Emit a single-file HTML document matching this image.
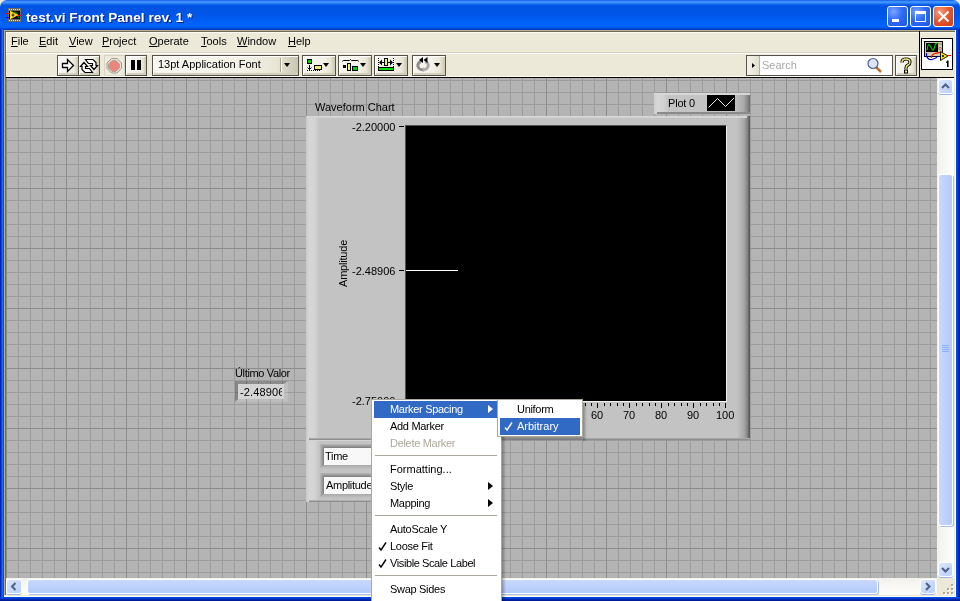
<!DOCTYPE html>
<html><head><meta charset="utf-8">
<style>
*{margin:0;padding:0;box-sizing:border-box}
html,body{width:960px;height:601px;overflow:hidden;background:#ECE9D8}
body{position:relative;font-family:"Liberation Sans",sans-serif;font-size:11px;color:#000;line-height:13px}
.a{position:absolute}
.nw{white-space:nowrap}
svg{display:block}
#title{left:0;top:0;width:960px;height:30px;border-radius:7px 7px 0 0;
 background:linear-gradient(to bottom,#0A40D8 0px,#3B92FF 1px,#3B92FF 3px,#1468EE 4px,#0054E3 6px,#0055E6 14px,#005DF4 20px,#0066FF 26px,#0058EE 28px,#0038C0 29px,#0038C0 30px)}
#ttext{left:26px;top:10px;color:#fff;font-weight:bold;font-size:13.7px;line-height:16px;text-shadow:1px 1px 0 #0A1E8C}
.tbtn{top:6px;width:21px;height:21px;border:1px solid #fff;border-radius:3px;
 background:radial-gradient(circle at 30% 25%,#7AA5FF 0,#2F6BF5 45%,#1E55E6 100%)}
.frL{left:0;top:29px;width:4px;height:572px;background:linear-gradient(to right,#0022B8 0,#0022B8 1px,#0848E0 1px,#0848E0 2px,#1A6CF5 2px,#1A6CF5 3px,#0050E0 3px)}
.frR{left:956px;top:29px;width:4px;height:572px;background:linear-gradient(to right,#0050EC 0,#0048E0 1px,#0034C8 2px,#0020A8 3px,#001890 4px)}
.frB{left:0;top:597px;width:960px;height:4px;background:linear-gradient(to bottom,#0050EC 0,#0044DC 1px,#0030C0 2px,#0020A0 3px,#001890 4px)}
#menu{left:4px;top:30px;width:952px;height:23px;background:#ECE9D8;border-top:1px solid #B9B08E;border-left:1px solid #B9B08E}
#menu2{left:5px;top:31px;width:950px;height:22px;border-top:1px solid #6E6A5C;border-left:1px solid #6E6A5C;box-shadow:inset 1px 1px 0 #FFFDF2}
.mi{top:35px}
.mi u{text-decoration:underline;text-decoration-thickness:1px;text-underline-offset:1px}
#tb{left:6px;top:52px;width:913px;height:25px;background:#ECE9D8;border-top:1px solid #D6D2C2;box-shadow:inset 0 1px 0 #fff}
.btn{top:55px;height:21px;border:1px solid #55534A;
 background:linear-gradient(to right,#F7F6EF 0,#F4F2E8 60%,#E9E6D6 85%,#C9C5B2 100%);
 box-shadow:inset 1px 1px 0 #fff,inset 0 -2px 1px #D3CFBC}
.dd{position:absolute;width:0;height:0;border-left:3.5px solid transparent;border-right:3.5px solid transparent;border-top:4px solid #000}
#panel{left:6px;top:78px;width:931px;height:500px;background-color:#B4B4B4;
 background-image:
  linear-gradient(to right,#8C8C8C 1px,transparent 1px),
  linear-gradient(to bottom,#8C8C8C 1px,transparent 1px),
  linear-gradient(to right,#9C9C9C 1px,transparent 1px),
  linear-gradient(to bottom,#9C9C9C 1px,transparent 1px);
 background-size:60px 60px,60px 60px,12px 12px,12px 12px;
 background-position:0px 50px,0px 50px,0px 2px,0px 2px}
.sb{background:linear-gradient(to right,#F3F1EC,#FEFEFB)}
.sbh{background:linear-gradient(to bottom,#F3F1EC,#FEFEFB)}
.sbtn{border:1px solid #fff;border-radius:3px;background:linear-gradient(135deg,#DCE6FD,#B9CEFA);box-shadow:0 1px 0 #98B4EC}
.thumbv{border:1px solid #fff;border-radius:3px;box-shadow:1px 1px 0 #A9BEEA;background:linear-gradient(to right,#C9D8FC,#BCD0FB 60%,#B3C9F8)}
.thumbh{border:1px solid #fff;border-radius:3px;box-shadow:1px 1px 0 #A9BEEA;background:linear-gradient(to bottom,#C9D8FC,#BCD0FB 60%,#B3C9F8)}
.sunk{border-style:solid;border-width:4px;border-color:rgba(0,0,0,.28) rgba(255,255,255,.12) rgba(255,255,255,.1) rgba(0,0,0,.32)}
.ml{left:16px;letter-spacing:-0.3px}
.row{position:absolute;left:2px;width:123px;height:17px}
.row span{position:absolute;top:2px}
.sep{position:absolute;left:3px;width:122px;height:1px;background:#ACA899}
.arr{position:absolute;left:114px;top:4px;width:0;height:0;border-top:4.5px solid transparent;border-bottom:4.5px solid transparent;border-left:5px solid #000}
.ck{position:absolute;left:4px;top:4px}
</style></head><body><div id="root" style="position:absolute;left:0;top:0;width:960px;height:601px;will-change:transform">
<!-- title bar -->
<div class="a" id="title"></div>
<svg class="a" style="left:5px;top:7px" width="18" height="16">
 <rect x="3" y="1" width="13" height="14" fill="#6E6A5E"/>
 <rect x="4" y="4" width="11" height="8" fill="#000"/>
 <path d="M4 2.5h11M4 13.5h11" stroke="#E0E0E0" stroke-dasharray="1 1"/>
 <path d="M9 5q2 -1 3 2t2 4" stroke="#00B000" fill="none"/>
 <path d="M5 3.5L13.5 8L5 12.5Z" fill="#FFD000"/>
 <path d="M6 5L11 8L6 11Z" fill="#FFE850"/>
 <path d="M8 6.5v3M6.5 8h3" stroke="#222" stroke-width="1.2"/>
 <path d="M1 6.5h4M13 8.5h4" stroke="#F00"/>
 <path d="M1 10.5h4" stroke="#00F"/>
</svg>
<div class="a nw" id="ttext">test.vi Front Panel rev. 1 *</div>
<div class="a tbtn" style="left:887px"><div class="a" style="left:4px;top:12px;width:7px;height:3px;background:#fff"></div></div>
<div class="a tbtn" style="left:910px"><div class="a" style="left:4px;top:4px;width:11px;height:11px;border:1px solid #fff;border-top:3px solid #fff"></div></div>
<div class="a tbtn" style="left:933px;background:radial-gradient(circle at 30% 25%,#F39C7E 0,#E2562D 50%,#D23C14 100%)">
 <svg class="a" style="left:0;top:0" width="19" height="19"><path d="M4.5 4.5 L14.5 14.5 M14.5 4.5 L4.5 14.5" stroke="#fff" stroke-width="2"/></svg></div>
<!-- frame -->
<div class="a frL"></div><div class="a frR"></div><div class="a frB"></div>
<!-- menu -->
<div class="a" id="menu"></div><div class="a" id="menu2"></div>
<div class="a mi nw" style="left:11px"><u>F</u>ile</div>
<div class="a mi nw" style="left:39px"><u>E</u>dit</div>
<div class="a mi nw" style="left:69px"><u>V</u>iew</div>
<div class="a mi nw" style="left:102px"><u>P</u>roject</div>
<div class="a mi nw" style="left:149px"><u>O</u>perate</div>
<div class="a mi nw" style="left:201px"><u>T</u>ools</div>
<div class="a mi nw" style="left:237px"><u>W</u>indow</div>
<div class="a mi nw" style="left:288px"><u>H</u>elp</div>
<!-- toolbar -->
<div class="a" id="tb"></div>
<div class="a btn" style="left:57px;width:22px"></div>
<svg class="a" style="left:57px;top:55px" width="22" height="21"><path d="M5.5 8.5h5v-4l6 6l-6 6v-4h-5z" fill="#fff" stroke="#000" stroke-width="1.3"/></svg>
<div class="a btn" style="left:78px;width:22px"></div>
<svg class="a" style="left:78px;top:55px" width="22" height="21"><path d="M7.5 4.5h7.5l3 3v3h1.5l-3.5 4l-3.5 -4h2v-2h-4z" fill="#fff" stroke="#000" stroke-width="1.2"/><path d="M14.5 17.5h-7.5l-3 -3v-3h-1.5l3.5 -4l3.5 4h-2v2h4z" fill="#fff" stroke="#000" stroke-width="1.2"/></svg>
<div class="a" style="left:104px;top:55px;width:21px;height:21px;background:#EEEBDD;border:1px solid #D9D5C5"></div>
<svg class="a" style="left:104px;top:55px" width="21" height="21"><path d="M7.5 3.5h5.5l4.5 4.5v5.5l-4.5 4.5h-5.5l-4.5 -4.5v-5.5z" fill="#E8E6DA" stroke="#9A9A90"/><path d="M8 5.5h4l3.5 3.5v4l-3.5 3.5h-4l-3.5 -3.5v-4z" fill="#E9877E" stroke="#9AA090" stroke-width=".7"/></svg>
<div class="a btn" style="left:125px;width:22px"></div>
<div class="a" style="left:131px;top:60px;width:4px;height:10px;background:#000"></div>
<div class="a" style="left:137px;top:60px;width:4px;height:10px;background:#000"></div>
<div class="a btn" style="left:152px;width:147px"></div>
<div class="a nw" style="left:158px;top:58px">13pt Application Font</div>
<div class="a" style="left:280px;top:58px;width:1px;height:14px;background:#A8A496"></div>
<div class="a" style="left:281px;top:58px;width:1px;height:14px;background:#fff"></div>
<div class="dd" style="left:284px;top:63px"></div>
<div class="a btn" style="left:302px;width:34px"></div>
<svg class="a" style="left:302px;top:55px" width="34" height="21">
 <rect x="5.5" y="4.5" width="4" height="4" fill="#00D000" stroke="#000"/>
 <rect x="12.5" y="10.5" width="7" height="4" fill="#F0F070" stroke="#000"/>
 <path d="M7.5 10v5M5.5 12.5l2 2l2 -2" stroke="#000" fill="none"/>
 <path d="M5 15.5h14" stroke="#000" stroke-dasharray="1 1"/>
</svg>
<div class="dd" style="left:323px;top:63px"></div>
<div class="a btn" style="left:338px;width:34px"></div>
<svg class="a" style="left:338px;top:55px" width="34" height="21">
 <path d="M4.5 6.5q0 -1 1 -1h6l1 -1l1 1h6q1 0 1 1" stroke="#000" fill="none"/>
 <rect x="5" y="10" width="3" height="3" fill="#000"/>
 <rect x="9.5" y="8.5" width="3" height="7" fill="#F0F070" stroke="#000"/>
 <rect x="14.5" y="11.5" width="5" height="4" fill="#00D000" stroke="#000"/>
</svg>
<div class="dd" style="left:360px;top:63px"></div>
<div class="a btn" style="left:374px;width:34px"></div>
<svg class="a" style="left:374px;top:55px" width="34" height="21">
 <rect x="10.5" y="3.5" width="3" height="7" fill="#F0F070" stroke="#000"/>
 <path d="M6 7.5h4M14 7.5h4" stroke="#000"/>
 <path d="M5 7.5l3 -3v6zM19 7.5l-3 -3v6z" fill="#000"/>
 <path d="M4.5 3v9M19.5 3v9" stroke="#000" stroke-dasharray="1 1"/>
 <rect x="4.5" y="12.5" width="15" height="3" fill="#00E000" stroke="#000"/>
</svg>
<div class="dd" style="left:396px;top:63px"></div>
<div class="a btn" style="left:412px;width:34px"></div>
<svg class="a" style="left:412px;top:55px" width="34" height="21">
 <path d="M9 6.5a4 4 0 1 0 2 8" stroke="#8C8C8C" stroke-width="3" fill="none"/>
 <path d="M13 6.5a4 4 0 1 1 -2 8" stroke="#A8A8A8" stroke-width="3" fill="none"/>
 <path d="M11 12l3 2.5l-3 2.5z" fill="#B0B0B0"/>
 <path d="M7 5l4 -3v6zM11.5 5l4 -3v6z" fill="#000"/>
</svg>
<div class="dd" style="left:434px;top:63px"></div>
<div class="a" style="left:746px;top:55px;width:147px;height:21px;border:1px solid #55534A;background:#fff"></div>
<div class="a" style="left:747px;top:56px;width:13px;height:19px;background:linear-gradient(to right,#F5F3EA,#E3DFCF);border-right:1px solid #B5B1A0"></div>
<svg class="a" style="left:747px;top:56px" width="13" height="19"><path d="M5 7v5l3 -2.5z" fill="#000"/></svg>
<div class="a nw" style="left:762px;top:59px;color:#A8A8A8">Search</div>
<svg class="a" style="left:864px;top:56px" width="22" height="19">
 <path d="M12 11l5 5" stroke="#C0702A" stroke-width="2.5"/>
 <circle cx="9" cy="7.5" r="5" fill="#DDE4FA" stroke="#506090" stroke-width="1.2"/>
</svg>
<div class="a btn" style="left:895px;width:22px"></div>
<svg class="a" style="left:895px;top:55px" width="22" height="21"><path d="M7 7.5q0 -3.5 4 -3.5t4 3q0 2 -2 3t-2 3v1" stroke="#000" stroke-width="3.2" fill="none"/><path d="M7 7.5q0 -3.5 4 -3.5t4 3q0 2 -2 3t-2 3v1" stroke="#F3EC7A" stroke-width="1.4" fill="none"/><rect x="9.5" y="15" width="3" height="3" fill="#F3EC7A" stroke="#000"/></svg>
<div class="a" style="left:919px;top:31px;width:1px;height:46px;background:#000"></div>
<div class="a" style="left:921px;top:38px;width:32px;height:32px;border:1px solid #000;background:#fff"></div>
<svg class="a" style="left:922px;top:39px" width="30" height="30">
 <rect x="2.5" y="2.5" width="18" height="15" fill="#D2CDA5" stroke="#000"/>
 <rect x="4" y="4" width="12" height="9" fill="#000"/>
 <path d="M5 11q1.2 -7 2.5 -5t2.5 4q1.2 3 2.5 -2t2.5 -3" stroke="#00C000" fill="none" stroke-width="1.2"/>
 <circle cx="18" cy="9.5" r="1.3" fill="#E8B890" stroke="#606060" stroke-width=".6"/>
 <path d="M17 4v2M19 4v2" stroke="#707070" stroke-width=".8"/>
 <path d="M4.5 14v3q2 5 7 3q3 -1 4 -2.5h4" stroke="#0000C0" fill="none" stroke-width="1.2"/>
 <path d="M9 19q1 -4 4 -4.5q2 -1 6 -1.2" stroke="#F00" fill="none" stroke-width="1.2"/>
 <path d="M18.5 12.5l7.5 4.5l-7.5 4.5z" fill="#F5E51A" stroke="#000" stroke-width=".9"/>
 <circle cx="21" cy="17" r="1" fill="#000"/>
 <path d="M26 16.5h3" stroke="#F00"/>
 <path d="M25 21.5h1.6v6.5h-1.6zM24 22.5h1v1.2h-1z" fill="#000"/>
</svg>
<div class="a" style="left:6px;top:77px;width:948px;height:1px;background:#000"></div><div class="a" style="left:6px;top:76px;width:913px;height:1px;background:#FFFDF2"></div>
<!-- panel -->
<div class="a" id="panel"></div>
<div class="a" style="left:4px;top:53px;width:1px;height:543px;background:#B9B08E"></div>
<div class="a" style="left:5px;top:53px;width:1px;height:543px;background:#6E6A5C"></div>
<!-- scrollbars -->
<div class="a sb" style="left:937px;top:78px;width:17px;height:500px"></div>
<div class="a sbtn" style="left:938px;top:79px;width:15px;height:15px"></div>
<svg class="a" style="left:938px;top:79px" width="15" height="15"><path d="M4 9l3.5 -3.5l3.5 3.5" stroke="#4D6185" stroke-width="2" fill="none"/></svg>
<div class="a thumbv" style="left:938px;top:174px;width:15px;height:352px"></div>
<svg class="a" style="left:938px;top:344px" width="15" height="10"><path d="M4 1.5h7M4 3.5h7M4 5.5h7M4 7.5h7" stroke="#8CB0F8"/></svg>
<div class="a sbtn" style="left:938px;top:562px;width:15px;height:15px"></div>
<svg class="a" style="left:938px;top:562px" width="15" height="15"><path d="M4 6l3.5 3.5l3.5 -3.5" stroke="#4D6185" stroke-width="2" fill="none"/></svg>
<div class="a sbh" style="left:6px;top:578px;width:931px;height:17px"></div>
<div class="a sbtn" style="left:6px;top:579px;width:16px;height:15px"></div>
<svg class="a" style="left:6px;top:579px" width="16" height="15"><path d="M9.5 4l-3.5 3.5l3.5 3.5" stroke="#4D6185" stroke-width="2" fill="none"/></svg>
<div class="a thumbh" style="left:27px;top:579px;width:851px;height:15px"></div>
<div class="a sbtn" style="left:920px;top:579px;width:16px;height:15px"></div>
<svg class="a" style="left:920px;top:579px" width="16" height="15"><path d="M6 4l3.5 3.5l-3.5 3.5" stroke="#4D6185" stroke-width="2" fill="none"/></svg>
<div class="a" style="left:937px;top:578px;width:17px;height:17px;background:#ECE9D8"></div>
<svg class="a" style="left:937px;top:578px" width="17" height="17"><path d="M15 7h2v2h-2zM11 11h2v2h-2zM15 11h2v2h-2zM7 15h2v2h-2zM11 15h2v2h-2zM15 15h2v2h-2z" fill="#fff"/><path d="M14 6h2v2h-2zM10 10h2v2h-2zM14 10h2v2h-2zM6 14h2v2h-2zM10 14h2v2h-2zM14 14h2v2h-2z" fill="#A9A793"/></svg>
<div class="a" style="left:4px;top:595px;width:952px;height:1px;background:#ECE9D8"></div><div class="a" style="left:4px;top:596px;width:952px;height:1px;background:#FFFDF4"></div><div class="a" style="left:955px;top:30px;width:1px;height:567px;background:#FFFDF4"></div><div class="a" style="left:954px;top:32px;width:1px;height:564px;background:#ECE9D8"></div>

<!-- chart -->
<div class="a nw" style="left:315px;top:101px">Waveform Chart</div>
<div class="a" style="left:654px;top:93px;width:96px;height:21px;background:linear-gradient(to right,#CFCFCF 0,#D8D8D8 4px,#D2D2D2 10px,#C4C4C4 14px,#C4C4C4 80px,#A8A8A8 90px,#7A7A7A 95px,#606060 96px)"></div>
<div class="a" style="left:654px;top:93px;width:96px;height:2px;background:#D8D8D8"></div>
<div class="a" style="left:657px;top:112px;width:93px;height:2px;background:#8A8A8A"></div>
<div class="a nw" style="left:668px;top:97px;letter-spacing:-0.2px">Plot 0</div>
<div class="a" style="left:707px;top:95px;width:28px;height:16px;background:#000"></div>
<svg class="a" style="left:707px;top:95px" width="28" height="16"><path d="M1.5 12.5 L10.5 3.5 L18.5 11.5 L27 3" stroke="#E8E8E8" stroke-width="1" fill="none"/></svg>
<div class="a" id="chart" style="left:306px;top:116px;width:444px;height:324px;background:linear-gradient(to right,#C8C8C8 0,#D6D6D6 3px,#D4D4D4 9px,#C3C3C3 13px,#C3C3C3 431px,#A8A8A8 438px,#7C7C7C 442px,#5A5A5A 443px,#5A5A5A 444px)"></div>
<div class="a" style="left:306px;top:116px;width:441px;height:2px;background:linear-gradient(to bottom,#D8D8D8,#D0D0D0)"></div>
<div class="a" style="left:309px;top:439px;width:441px;height:1px;background:#8E8E8E"></div><div class="a" style="left:309px;top:438px;width:441px;height:1px;background:#A8A8A8"></div>
<div class="a" style="left:405px;top:125px;width:322px;height:277px;background:#000;border-left:1px solid #505050;border-top:1px solid #505050;border-right:1px solid #F0F0F0;border-bottom:1px solid #F0F0F0"></div>
<div class="a" style="left:406px;top:270px;width:52px;height:1px;background:#fff"></div>
<div class="a nw" style="left:352px;top:121px">-2.20000</div>
<div class="a nw" style="left:352px;top:265px">-2.48906</div>
<div class="a nw" style="left:352px;top:395px">-2.75000</div>
<div class="a" style="left:399px;top:126px;width:5px;height:1px;background:#000"></div>
<div class="a" style="left:399px;top:270px;width:5px;height:1px;background:#000"></div>
<div class="a" style="left:399px;top:400px;width:5px;height:1px;background:#000"></div>
<div class="a nw" style="left:337px;top:287px;transform:rotate(-90deg);transform-origin:0 0;letter-spacing:-0.2px">Amplitude</div>
<svg class="a" style="left:405px;top:403px" width="322" height="6" shape-rendering="crispEdges"><path d="M0.5 0v5M7.5 0v3M13.5 0v3M20.5 0v3M26.5 0v3M32.5 0v5M39.5 0v3M45.5 0v3M52.5 0v3M58.5 0v3M64.5 0v5M71.5 0v3M77.5 0v3M84.5 0v3M90.5 0v3M96.5 0v5M103.5 0v3M109.5 0v3M116.5 0v3M122.5 0v3M128.5 0v5M135.5 0v3M141.5 0v3M148.5 0v3M154.5 0v3M160.5 0v5M167.5 0v3M173.5 0v3M180.5 0v3M186.5 0v3M192.5 0v5M199.5 0v3M205.5 0v3M212.5 0v3M218.5 0v3M224.5 0v5M231.5 0v3M237.5 0v3M244.5 0v3M250.5 0v3M256.5 0v5M263.5 0v3M269.5 0v3M276.5 0v3M282.5 0v3M288.5 0v5M295.5 0v3M301.5 0v3M308.5 0v3M314.5 0v3M320.5 0v5" stroke="#000" stroke-width="1"/></svg>
<div class="a nw" style="left:591px;top:409px">60</div>
<div class="a nw" style="left:623px;top:409px">70</div>
<div class="a nw" style="left:655px;top:409px">80</div>
<div class="a nw" style="left:687px;top:409px">90</div>
<div class="a nw" style="left:716px;top:409px">100</div>
<!-- scale legend -->
<div class="a" style="left:306px;top:440px;width:100px;height:62px;background:linear-gradient(to right,#C8C8C8 0,#D6D6D6 3px,#D4D4D4 9px,#C3C3C3 13px)"></div>
<div class="a" style="left:306px;top:440px;width:100px;height:1px;background:#D4D4D4"></div>
<div class="a" style="left:309px;top:500px;width:97px;height:1px;background:#B0B0B0"></div><div class="a" style="left:309px;top:501px;width:97px;height:1px;background:#8E8E8E"></div>
<div class="a" style="left:320px;top:444px;width:90px;height:4px;background:linear-gradient(to bottom,#B9B9B9,#7C7C7C);clip-path:polygon(0 0,90px 0,90px 4px,4px 4px)"></div>
<div class="a" style="left:320px;top:444px;width:4px;height:25px;background:linear-gradient(to right,#BDBDBD,#7C7C7C);clip-path:polygon(0 0,4px 4px,4px 21px,0 25px)"></div>
<div class="a" style="left:320px;top:465px;width:90px;height:4px;background:linear-gradient(to bottom,#A9A9A9,#C2C2C2);clip-path:polygon(4px 0,90px 0,90px 4px,0 4px)"></div>
<div class="a" style="left:324px;top:448px;width:86px;height:17px;background:#F8F8F8"></div>
<div class="a" style="left:320px;top:473px;width:90px;height:4px;background:linear-gradient(to bottom,#B9B9B9,#7C7C7C);clip-path:polygon(0 0,90px 0,90px 4px,4px 4px)"></div>
<div class="a" style="left:320px;top:473px;width:4px;height:25px;background:linear-gradient(to right,#BDBDBD,#7C7C7C);clip-path:polygon(0 0,4px 4px,4px 21px,0 25px)"></div>
<div class="a" style="left:320px;top:494px;width:90px;height:4px;background:linear-gradient(to bottom,#A9A9A9,#C2C2C2);clip-path:polygon(4px 0,90px 0,90px 4px,0 4px)"></div>
<div class="a" style="left:324px;top:477px;width:86px;height:17px;background:#F8F8F8"></div>

<div class="a nw" style="left:325px;top:450px;letter-spacing:-0.3px">Time</div>
<div class="a nw" style="left:326px;top:479px;letter-spacing:-0.3px">Amplitude</div>
<!-- indicator -->
<div class="a nw" style="left:235px;top:367px;letter-spacing:-0.35px">Último Valor</div>
<div class="a" style="left:235px;top:381px;width:53px;height:21px;border-style:solid;border-width:3px 4px 3px 3px;border-color:rgba(0,0,0,.22) rgba(255,255,255,.15) rgba(255,255,255,.12) rgba(0,0,0,.26)"></div>
<div class="a" style="left:238px;top:384px;width:46px;height:15px;background:#D4D4D4"></div><div class="a" style="left:238px;top:384px;width:44px;height:15px;overflow:hidden"><div class="a nw" style="left:2px;top:2px;letter-spacing:0.15px">-2.48906</div></div>

<!-- context menu -->
<div class="a" style="left:502px;top:403px;width:4px;height:198px;background:linear-gradient(to right,rgba(0,0,0,.3),rgba(0,0,0,0))"></div>
<div class="a" id="cm" style="left:371px;top:399px;width:131px;height:210px;background:#fff;border:1px solid #ACA899">
 <div class="row" style="top:1px;background:#316AC5;color:#fff"><span class="ml">Marker Spacing</span><div class="arr" style="border-left-color:#fff"></div></div>
 <div class="row" style="top:18px"><span class="ml">Add Marker</span></div>
 <div class="row" style="top:35px;color:#ACA899"><span class="ml">Delete Marker</span></div>
 <div class="sep" style="top:55px"></div>
 <div class="row" style="top:61px"><span class="ml" style="letter-spacing:0">Formatting...</span></div>
 <div class="row" style="top:78px"><span class="ml">Style</span><div class="arr"></div></div>
 <div class="row" style="top:95px"><span class="ml">Mapping</span><div class="arr"></div></div>
 <div class="sep" style="top:115px"></div>
 <div class="row" style="top:121px"><span class="ml">AutoScale Y</span></div>
 <div class="row" style="top:138px"><svg class="ck" width="9" height="11"><path d="M1 5.5l2 2.5l5 -7.5" stroke="#000" stroke-width="1.4" fill="none"/></svg><span class="ml">Loose Fit</span></div>
 <div class="row" style="top:155px"><svg class="ck" width="9" height="11"><path d="M1 5.5l2 2.5l5 -7.5" stroke="#000" stroke-width="1.4" fill="none"/></svg><span class="ml" style="letter-spacing:-0.4px">Visible Scale Label</span></div>
 <div class="sep" style="top:175px"></div>
 <div class="row" style="top:181px"><span class="ml">Swap Sides</span></div>
</div>
<!-- submenu -->
<div class="a" style="left:583px;top:403px;width:4px;height:38px;background:linear-gradient(to right,rgba(0,0,0,.3),rgba(0,0,0,0))"></div>
<div class="a" style="left:501px;top:437px;width:82px;height:4px;background:linear-gradient(to bottom,rgba(0,0,0,.3),rgba(0,0,0,0))"></div>
<div class="a" style="left:497px;top:399px;width:86px;height:38px;background:#fff;border:1px solid #ACA899">
 <div class="row" style="top:1px;width:80px"><span class="ml" style="left:17px">Uniform</span></div>
 <div class="row" style="top:18px;width:80px;background:#316AC5;color:#fff"><svg class="ck" width="9" height="11"><path d="M1 5.5l2 2.5l5 -7.5" stroke="#fff" stroke-width="1.4" fill="none"/></svg><span class="ml" style="left:17px;letter-spacing:0">Arbitrary</span></div>
</div>
</div></body></html>
